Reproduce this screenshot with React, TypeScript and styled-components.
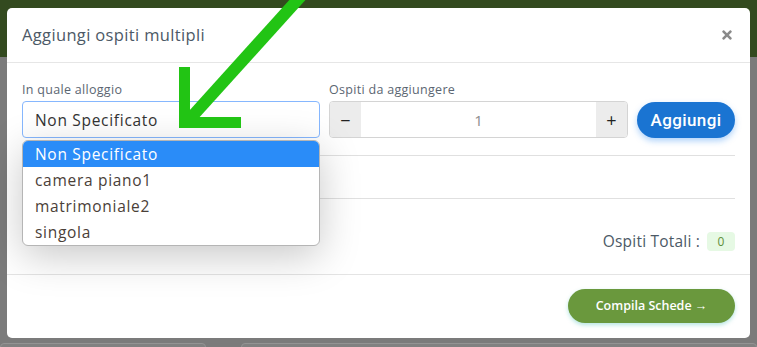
import React from "react";
import styled, { createGlobalStyle } from "styled-components";
import { FaTimes } from "react-icons/fa";

const Global = createGlobalStyle`
  html, body { margin: 0; padding: 0; }
  body { font-family: "Open Sans", "Noto Sans", sans-serif; background: #7b7b7b; }
  * { box-sizing: border-box; }
`;

const Page = styled.div`
  position: relative;
  width: 757px;
  height: 347px;
  overflow: hidden;
  background: linear-gradient(#334a1f 0, #334a1f 57px, #7b7b7b 57px);
  padding: 8px 7px 0 7px;
`;

const Modal = styled.div`
  position: relative;
  width: 743px;
  height: 330px;
  background: #fff;
  border-radius: 5px;
  display: flex;
  flex-direction: column;
`;

const Header = styled.div`
  height: 55px;
  padding: 0 15px;
  display: flex;
  align-items: center;
  justify-content: space-between;
  border-bottom: 1px solid #e6e6e6;
`;

const Title = styled.h5`
  margin: -2px 0 0 0;
  font-family: "Open Sans", sans-serif;
  font-weight: 400;
  font-size: 16.5px;
  letter-spacing: 0.35px;
  color: #4c5966;
`;

const Close = styled.span`
  display: flex;
  color: #8a8a8a;
  margin-right: 1px;
`;

const Body = styled.div`
  flex: 1;
  padding: 19px 15px 0 15px;
  display: flex;
  flex-direction: column;
`;

const Row = styled.div`
  display: flex;
  align-items: flex-end;
  gap: 9px;
`;

const Field = styled.div<{ $w: number }>`
  position: relative;
  width: ${(p) => p.$w}px;
  display: flex;
  flex-direction: column;
`;

const Label = styled.label`
  font-size: 12.5px;
  letter-spacing: 0.3px;
  color: #5b6672;
  line-height: 16px;
  margin-bottom: 3px;
`;

const Select = styled.div`
  height: 37px;
  border: 1px solid #86b7fe;
  border-radius: 4px;
  display: flex;
  align-items: center;
  padding: 1px 0 0 12px;
  font-size: 15.5px;
  letter-spacing: 0.7px;
  color: #333;
`;

const Dropdown = styled.ul`
  position: absolute;
  left: 0;
  top: 58px;
  width: 298px;
  margin: 0;
  padding: 0;
  list-style: none;
  background: #fff;
  border: 1px solid #b5b5b5;
  border-radius: 6px;
  overflow: hidden;
  box-shadow: 0 10px 40px rgba(0, 0, 0, 0.22);
  z-index: 2;
`;

const Option = styled.li<{ $active?: boolean }>`
  height: 26px;
  display: flex;
  align-items: center;
  padding-left: 12px;
  font-size: 15.5px;
  letter-spacing: 0.7px;
  color: ${(p) => (p.$active ? "#fff" : "#4a4038")};
  background: ${(p) => (p.$active ? "#2a8cf8" : "transparent")};
`;

const Group = styled.div`
  height: 37px;
  display: flex;
  border: 1px solid #d4d4d4;
  border-radius: 4px;
  overflow: hidden;
`;

const Step = styled.div`
  width: 31px;
  background: #ececec;
  display: flex;
  align-items: center;
  justify-content: center;
  font-size: 18px;
  color: #222;
`;

const Value = styled.div`
  flex: 1;
  display: flex;
  align-items: center;
  justify-content: center;
  font-size: 15px;
  color: #8c8c8c;
  font-weight: 400;
`;

const AddBtn = styled.button`
  width: 98px;
  height: 36px;
  border: none;
  border-radius: 18px;
  background: #1a74d2;
  color: #fff;
  font-family: Roboto, sans-serif;
  font-weight: 500;
  font-size: 17px;
  letter-spacing: 0.4px;
  box-shadow: 0 3px 6px rgba(30, 130, 240, 0.35);
`;

const Rule = styled.hr<{ $top: number }>`
  margin: ${(p) => p.$top}px 0 0 0;
  border: none;
  border-top: 1px solid #e0e0e0;
`;

const TotalRow = styled.div`
  display: flex;
  justify-content: flex-end;
  align-items: center;
  gap: 7px;
  margin-top: 31px;
`;

const TotalText = styled.span`
  font-size: 15.5px;
  letter-spacing: 0.2px;
  color: #4c5966;
`;

const Badge = styled.span`
  width: 28px;
  height: 19px;
  border-radius: 4px;
  background: #e6f9e4;
  color: #5f8f3a;
  font-size: 12px;
  display: flex;
  align-items: center;
  justify-content: center;
`;

const Footer = styled.div`
  height: 64px;
  border-top: 1px solid #e4e4e4;
  display: flex;
  justify-content: flex-end;
  align-items: center;
  padding: 0 15px 2px 0;
`;

const GoBtn = styled.button`
  width: 167px;
  height: 34px;
  border: none;
  border-radius: 17px;
  background: #6a983d;
  color: #fff;
  font-family: "Open Sans", sans-serif;
  font-weight: 600;
  font-size: 12.5px;
  box-shadow: 0 2px 4px rgba(40, 180, 170, 0.35);
`;

const BottomStrip = styled.div`
  display: flex;
  gap: 35px;
  margin: 5px -7px 0 -7px;
`;

const Ghost = styled.div<{ $w: number }>`
  width: ${(p) => p.$w}px;
  height: 12px;
  border: 1px solid #939393;
  border-radius: 4px;
  background: #818181;
`;

const Arrow = styled.svg`
  position: absolute;
  left: 0;
  top: 0;
  pointer-events: none;
  z-index: 5;
`;

export default function App() {
  return (
    <>
      <Global />
      <Page>
        <Modal>
          <Header>
            <Title>Aggiungi ospiti multipli</Title>
            <Close>
              <FaTimes size={14} />
            </Close>
          </Header>
          <Body>
            <Row>
              <Field $w={298}>
                <Label>In quale alloggio</Label>
                <Select>Non Specificato</Select>
                <Dropdown>
                  <Option $active>Non Specificato</Option>
                  <Option>camera piano1</Option>
                  <Option>matrimoniale2</Option>
                  <Option>singola</Option>
                </Dropdown>
              </Field>
              <Field $w={299}>
                <Label>Ospiti da aggiungere</Label>
                <Group>
                  <Step>−</Step>
                  <Value>1</Value>
                  <Step>+</Step>
                </Group>
              </Field>
              <AddBtn>Aggiungi</AddBtn>
            </Row>
            <Rule $top={17} />
            <Rule $top={42} />
            <TotalRow>
              <TotalText>Ospiti Totali :</TotalText>
              <Badge>0</Badge>
            </TotalRow>
          </Body>
          <Footer>
            <GoBtn>Compila Schede →</GoBtn>
          </Footer>
        </Modal>
        <BottomStrip>
          <Ghost $w={208} />
          <Ghost $w={520} />
        </BottomStrip>
        <Arrow width="757" height="347" viewBox="0 0 757 347">
          <line x1="301" y1="-4" x2="188" y2="121" stroke="#22c414" strokeWidth="12" />
          <polyline
            points="184.5,67 184.5,122.5 241,122.5"
            fill="none"
            stroke="#22c414"
            strokeWidth="11"
            strokeLinejoin="miter"
          />
        </Arrow>
      </Page>
    </>
  );
}
